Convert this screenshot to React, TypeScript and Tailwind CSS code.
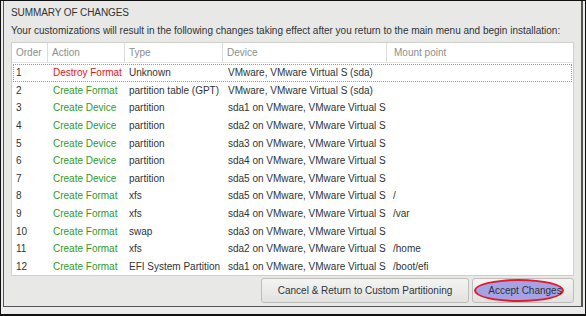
const font = { fontFamily: '"Liberation Sans", Arial, sans-serif' }

interface Change {
  order: number
  action: string
  type: string
  device: string
  mount?: string
}

const changes: Change[] = [
  { order: 1, action: "Destroy Format", type: "Unknown", device: "VMware, VMware Virtual S (sda)" },
  { order: 2, action: "Create Format", type: "partition table (GPT)", device: "VMware, VMware Virtual S (sda)" },
  { order: 3, action: "Create Device", type: "partition", device: "sda1 on VMware, VMware Virtual S" },
  { order: 4, action: "Create Device", type: "partition", device: "sda2 on VMware, VMware Virtual S" },
  { order: 5, action: "Create Device", type: "partition", device: "sda3 on VMware, VMware Virtual S" },
  { order: 6, action: "Create Device", type: "partition", device: "sda4 on VMware, VMware Virtual S" },
  { order: 7, action: "Create Device", type: "partition", device: "sda5 on VMware, VMware Virtual S" },
  { order: 8, action: "Create Format", type: "xfs", device: "sda5 on VMware, VMware Virtual S", mount: "/" },
  { order: 9, action: "Create Format", type: "xfs", device: "sda4 on VMware, VMware Virtual S", mount: "/var" },
  { order: 10, action: "Create Format", type: "swap", device: "sda3 on VMware, VMware Virtual S" },
  { order: 11, action: "Create Format", type: "xfs", device: "sda2 on VMware, VMware Virtual S", mount: "/home" },
  { order: 12, action: "Create Format", type: "EFI System Partition", device: "sda1 on VMware, VMware Virtual S", mount: "/boot/efi" },
]

const cols = "grid grid-cols-[36px_77px_98px_164px_1fr]"

function Row({ c }: { c: Change }) {
  const first = c.order === 1
  return (
    <div
      className={`${cols} h-[17.6px] items-center text-[10px] text-[#2e3436] mx-[1px] border border-dotted ${
        first ? "border-[#9a9a9a]" : "border-transparent"
      }`}
    >
      <div className="pl-[2px]">{c.order}</div>
      <div className={`pl-[3px] whitespace-nowrap ${first ? "text-[#e5131b]" : "text-[#2f9a2a]"}`}>{c.action}</div>
      <div className="pl-[2px] whitespace-nowrap">{c.type}</div>
      <div className="pl-[3px] whitespace-nowrap">{c.device}</div>
      <div className="pl-[4px] whitespace-nowrap">{c.mount}</div>
    </div>
  )
}

export default function App() {
  return (
    <div
      style={font}
      className="w-[586px] h-[316px] bg-[#ececec] border border-[#111] border-b-2 overflow-hidden"
    >
      <div className="h-[306px] mx-[2px] bg-[#e8e8e7] border-r-2 border-b border-l border-[#555] flex flex-col pl-[7px] pr-[7px]">
        <div className="pt-[5px] leading-[14px] text-[10px] text-[#2e3436] tracking-[-0.1px]">SUMMARY OF CHANGES</div>
        <div className="mt-[4px] leading-[14px] text-[10px] text-[#2e3436] whitespace-nowrap">
          Your customizations will result in the following changes taking effect after you return to the main menu and begin installation:
        </div>
        <div className="mt-[4px] h-[234px] bg-white border border-[#cfcfcc] overflow-hidden">
          <div className={`${cols} h-[20px] items-center text-[10px] text-[#8b8e8f] border-b border-[#e4e4e2]`}>
            <div className="pl-[4px] border-r border-[#dcdcda] h-full flex items-center">Order</div>
            <div className="pl-[4px] border-r border-[#dcdcda] h-full flex items-center">Action</div>
            <div className="pl-[4px] border-r border-[#dcdcda] h-full flex items-center">Type</div>
            <div className="pl-[4px] border-r border-[#dcdcda] h-full flex items-center">Device</div>
            <div className="pl-[7px] h-full flex items-center">Mount point</div>
          </div>
          <div className="pt-[1px]">
            {changes.map((c) => (
              <Row key={c.order} c={c} />
            ))}
          </div>
        </div>
        <div className="mt-[2px] flex justify-end gap-[3px]">
          <button className="w-[208px] h-[25px] rounded-[3px] border border-[#bdbdba] bg-gradient-to-b from-[#f4f4f3] to-[#e2e2e0] text-[10px] text-[#2e3436]">
            Cancel &amp; Return to Custom Partitioning
          </button>
          <button className="relative w-[102px] h-[25px] rounded-[3px] border border-[#bdbdba] bg-gradient-to-b from-[#f4f4f3] to-[#e2e2e0] text-[10px] text-[#2e3436]">
            <span className="absolute left-[1px] right-[9px] top-0 bottom-0 rounded-[50%] bg-[#a5a3e6] border-2 border-[#e21a2c]" />
            <span className="relative pl-[4px]">Accept Changes</span>
          </button>
        </div>
      </div>
    </div>
  )
}
